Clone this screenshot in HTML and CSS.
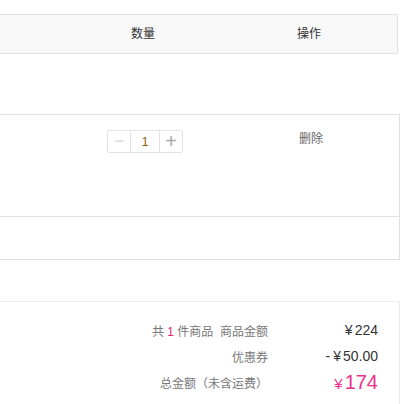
FILE: index.html
```html
<!DOCTYPE html>
<html lang="zh-CN">
  <head>
    <meta charset="UTF-8" />
    <meta name="viewport" content="width=device-width, initial-scale=1.0" />
    <title>购物车</title>
    <link rel="stylesheet" href="styles.css">
  </head>
  <body>
    <div class="cart">
      <div class="cart-head">
        <div></div>
        <div class="col-qty">数量</div>
        <div></div>
        <div class="col-op">操作</div>
        <div></div>
      </div>

      <div class="cart-list">
        <div class="cart-item">
          <div></div>
          <div class="stepper">
            <span class="step-btn minus">−</span>
            <span class="step-num">1</span>
            <span class="step-btn plus">+</span>
          </div>
          <div></div>
          <div class="col-op"><a class="del">删除</a></div>
          <div></div>
        </div>
        <div class="cart-foot"></div>
      </div>

      <div class="summary">
        <div class="sum-label">共 <em>1</em> 件商品&nbsp;&nbsp;商品金额</div>
        <div class="sum-value"><span class="yen">¥</span>224</div>
        <div class="sum-label">优惠券</div>
        <div class="sum-value"><span class="minus-sign">-</span><span class="yen">¥</span>50.00</div>
        <div class="sum-label total">总金额（未含运费）</div>
        <div class="sum-value total"><span class="yen">¥</span>174</div>
      </div>
    </div>
  </body>
</html>
```

FILE: styles.css
```css
body {
  margin: 0;
  font-family: "Liberation Sans", "Noto Sans CJK SC", sans-serif;
  font-size: 12px;
  color: #333;
  background: #fff;
}

.cart {
  margin-left: -20px;
  padding-top: 14px;
  width: 420px;
}

/* table head */
.cart-head {
  display: grid;
  grid-template-columns: 125px 74px 79px 100px 1fr;
  width: 416px;
  height: 38px;
  line-height: 38px;
  background: #f8f8f8;
  border: 1px solid #e2e2e2;
}

.col-qty,
.col-op {
  text-align: center;
}

/* items */
.cart-list {
  margin-top: 60px;
  border: 1px solid #e0e0e0;
}

.cart-item {
  display: grid;
  grid-template-columns: 126px 76px 77px 100px 1fr;
  height: 86px;
  padding-top: 15px;
  border-bottom: 1px solid #e0e0e0;
}

.cart-item .col-op {
  padding-left: 2px;
}

.stepper {
  display: flex;
  height: 21px;
  width: 74px;
  border: 1px solid #e3e3e3;
  border-radius: 2px;
}

.step-btn {
  width: 22px;
  line-height: 21px;
  text-align: center;
  font-size: 18px;
  color: #999;
}

.step-btn.minus {
  color: #ddd;
}

.step-btn.plus {
  font-size: 20px;
  color: #aaa;
}

.step-num {
  width: 28px;
  line-height: 22px;
  text-align: center;
  color: #8a5a00;
  border-left: 1px solid #e3e3e3;
  border-right: 1px solid #e3e3e3;
}

.del {
  display: block;
  line-height: 18px;
  color: #666;
}

.cart-foot {
  height: 42px;
}

/* summary */
.summary {
  margin-top: 41px;
  border: 1px solid #ececec;
  display: grid;
  grid-template-columns: 1fr 110px;
  grid-auto-rows: 26px;
  align-items: center;
  padding: 15px 21px 20px 0;
}

.sum-label {
  text-align: right;
  color: #777;
}

.sum-label em {
  font-style: normal;
  color: #e4237a;
}

.sum-value {
  text-align: right;
  font-size: 14px;
  color: #333;
}

.sum-value .yen {
  margin-right: 2px;
}

.minus-sign {
  margin-right: 3px;
}

.sum-value.total {
  font-size: 20px;
  color: #f0308a;
}

.sum-value.total .yen {
  font-size: 15px;
}
```
